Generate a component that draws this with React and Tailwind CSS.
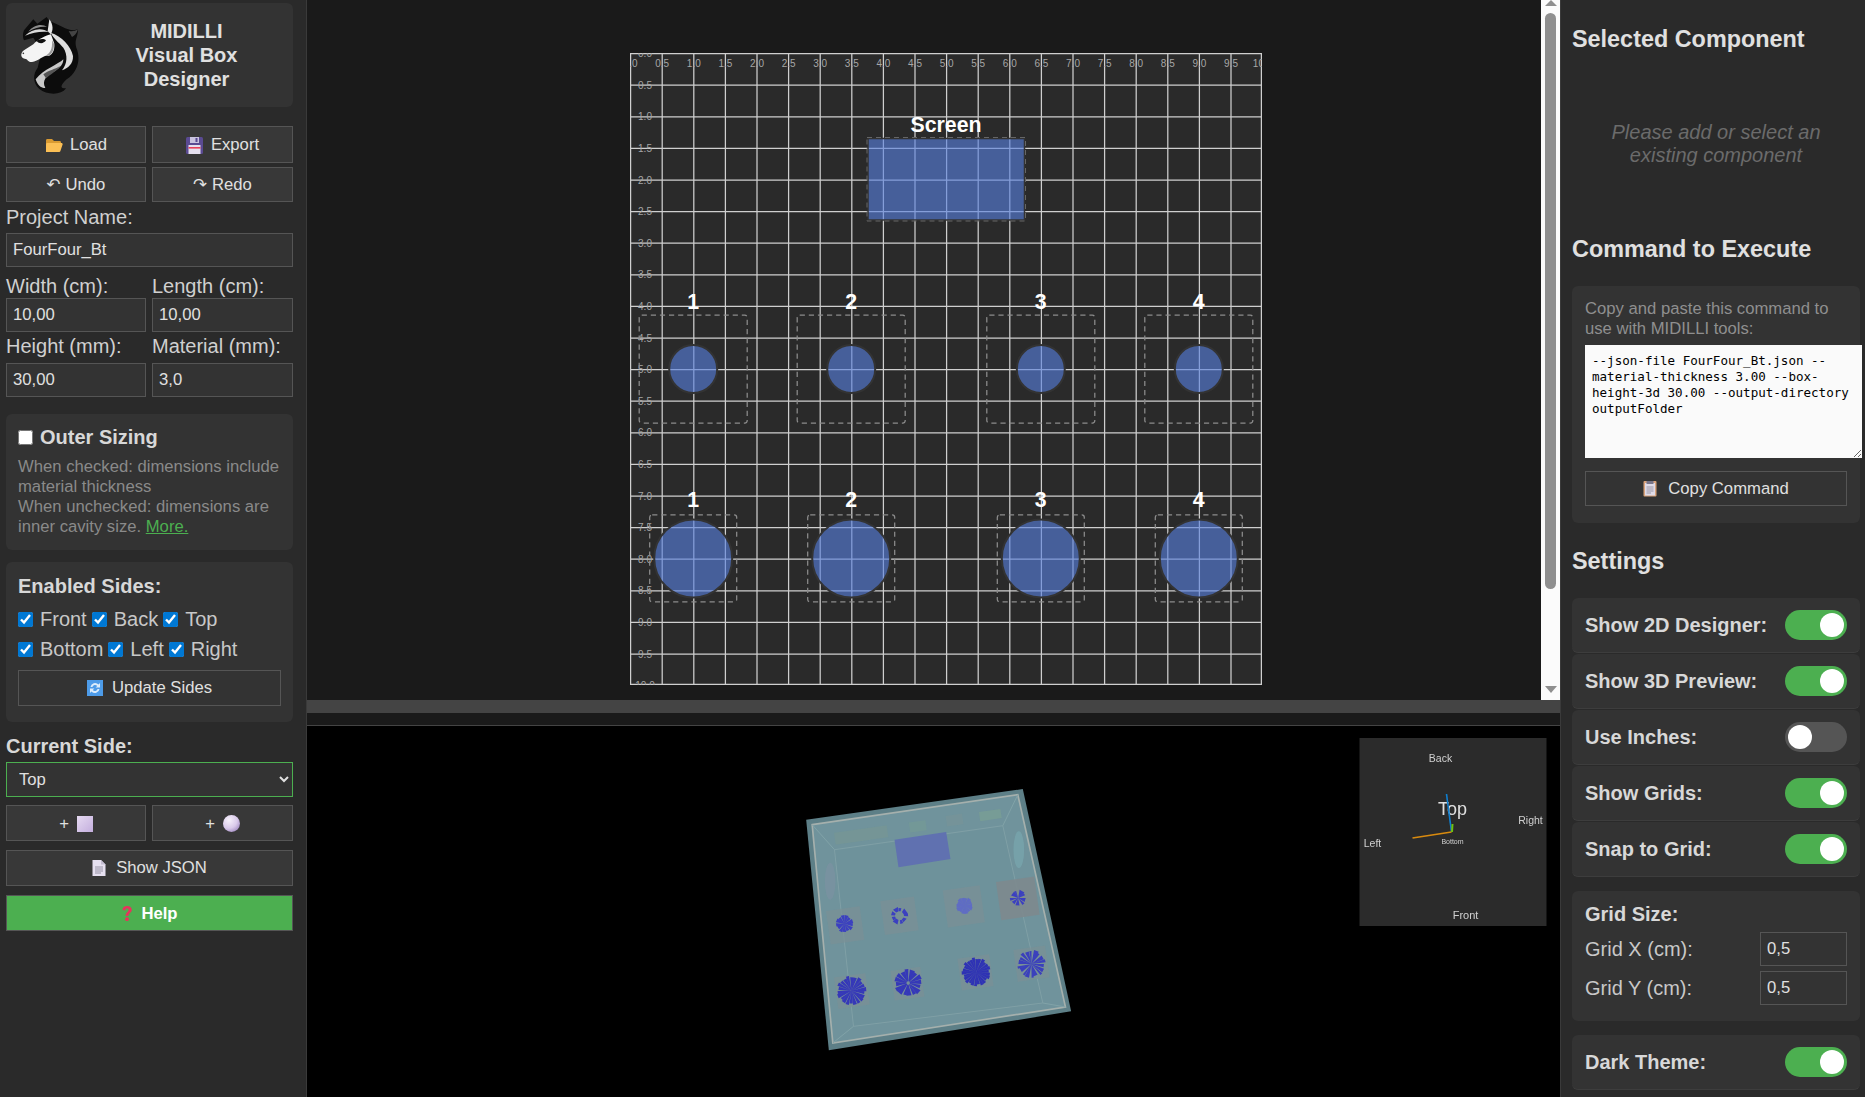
import React from "react";

const FONT = { fontFamily: '"Liberation Sans", "DejaVu Sans", Arial, sans-serif' };

function Folder() {
  return (
    <svg width="18" height="15" viewBox="0 0 18 15">
      <path d="M1 2.5 C1 1.5 1.5 1 2.5 1 H7 L9 3 H14.5 C15.5 3 16 3.5 16 4.5 V6 H1 Z" fill="#d99a32" />
      <path d="M1 14 V6.5 C1 5.5 1.5 5 2.5 5 H16 C17.3 5 18 5.6 17.6 6.6 L15.4 13 C15.1 13.8 14.6 14 14 14 Z" fill="#fbbf55" />
    </svg>
  );
}
function Floppy() {
  return (
    <svg width="17" height="17" viewBox="0 0 17 17">
      <rect width="17" height="17" rx="1.5" fill="#5a4a92" />
      <rect x="4" y="0" width="9" height="6" fill="#c9c3df" />
      <rect x="9.5" y="1" width="2" height="4" fill="#5a4a92" />
      <rect x="2.5" y="8" width="12" height="9" fill="#e6e0ef" />
      <rect x="2.5" y="10" width="12" height="1.6" fill="#e8405a" />
    </svg>
  );
}
function Refresh() {
  return (
    <svg width="16" height="16" viewBox="0 0 16 16">
      <rect width="16" height="16" fill="#4d9be8" />
      <path d="M3.5 7 A4.6 4.6 0 0 1 11.5 4.5 L13 3 V7.5 H8.6 L10.2 5.9 A2.8 2.8 0 0 0 5.4 7 Z" fill="#dcecfb" />
      <path d="M12.5 9 A4.6 4.6 0 0 1 4.5 11.5 L3 13 V8.5 H7.4 L5.8 10.1 A2.8 2.8 0 0 0 10.6 9 Z" fill="#dcecfb" />
    </svg>
  );
}
function Clipboard() {
  return (
    <svg width="14" height="16" viewBox="0 0 14 16">
      <rect width="13" height="15.5" x="0.5" rx="1" fill="#d9a47c" />
      <rect x="2" y="2" width="10" height="12.5" fill="#dfdbe8" />
      <rect x="3.5" y="0" width="7" height="3" rx="0.5" fill="#77758a" />
      <path d="M3.5 6 H10.5 M3.5 8 H10.5 M3.5 10 H10.5 M3.5 12 H8" stroke="#9b98a8" strokeWidth="1" />
    </svg>
  );
}
function Page() {
  return (
    <svg width="14" height="16" viewBox="0 0 14 16">
      <path d="M0.5 0 H9 L13.5 4.5 V16 H0.5 Z" fill="#e6e0f0" />
      <path d="M9 0 L13.5 4.5 H9 Z" fill="#c4bdd2" />
      <path d="M3 7 H11 M3 9 H11 M3 11 H11 M3 13 H9" stroke="#8f8a9c" strokeWidth="0.9" />
    </svg>
  );
}
function Question() {
  return (
    <svg width="12" height="17" viewBox="0 0 12 17">
      <path d="M1.5 5 C1.5 2 3.5 1 6 1 C9 1 10.8 2.6 10.8 5 C10.8 7.5 7.6 8 7.4 11 H4.6 C4.6 7.4 7.6 7 7.6 5 C7.6 4 7 3.6 6 3.6 C5 3.6 4.4 4.2 4.4 5.4 Z" fill="#e8335c" />
      <circle cx="6" cy="14.2" r="1.9" fill="#e8335c" />
    </svg>
  );
}
function PurpleSquare() {
  return (
    <svg width="16" height="16" viewBox="0 0 16 16">
      <defs>
        <linearGradient id="ps" x1="0" y1="0" x2="1" y2="1">
          <stop offset="0" stopColor="#e6daf2" />
          <stop offset="1" stopColor="#c3aedd" />
        </linearGradient>
      </defs>
      <rect width="16" height="16" fill="url(#ps)" />
    </svg>
  );
}
function Sphere() {
  return (
    <svg width="17" height="17" viewBox="0 0 17 17">
      <defs>
        <radialGradient id="sp" cx="0.35" cy="0.3" r="0.8">
          <stop offset="0" stopColor="#f6f1fb" />
          <stop offset="0.6" stopColor="#d9c9ea" />
          <stop offset="1" stopColor="#9f88c0" />
        </radialGradient>
      </defs>
      <circle cx="8.5" cy="8.5" r="8.5" fill="url(#sp)" />
    </svg>
  );
}

function Logo() {
  return (
    <svg width="60" height="81" viewBox="60 42 180 243">
      <path d="M100 55 L112 68 L140 48 L148 60 C180 72 210 95 234 85 C234 110 222 118 229 140 C244 175 232 215 200 235 C185 250 175 262 198 262 C183 284 140 282 118 264 C98 245 98 220 113 200 L125 150 L100 110 L72 118 C66 104 70 95 72 88 Z" fill="#0c0c0c" />
      <path d="M75 104 C95 84 125 78 147 94 C125 90 100 95 75 104 Z" fill="#d8d8d8" />
      <path d="M85 92 C100 72 125 66 142 78 C122 76 104 82 85 92 Z" fill="#8a8a8a" />
      <path d="M148 55 C160 70 160 88 152 100 L143 90 Z" fill="#e8e8e8" />
      <path d="M153 100 C138 104 115 114 100 130 L72 148 C60 156 62 172 74 173 C84 173 82 184 96 183 C115 180 122 170 135 165 C155 168 165 150 163 128 Z" fill="#f4f4f4" />
      <path d="M135 165 C152 168 163 150 162 128 L156 118 C158 145 150 158 135 165 Z" fill="#9a9a9a" />
      <path d="M110 120 C118 113 132 112 138 118 C132 128 118 130 110 120 Z" fill="#111" />
      <circle cx="70" cy="157" r="2.5" fill="#333" />
      <path d="M152 95 C185 105 213 135 219 165 C220 188 204 202 186 208 C202 188 204 162 190 140 C175 122 162 115 152 95 Z" fill="#dedede" />
      <path d="M190 175 C175 190 130 205 107 235 C113 255 128 264 136 260 C124 240 140 222 165 210 C180 200 190 190 190 175 Z" fill="#c8c8c8" />
      <path d="M130 220 C145 208 165 205 180 195 C170 212 150 220 138 232 Z" fill="#555" />
      <path d="M206 90 C218 92 226 90 234 85 C230 98 222 106 216 108 Z" fill="#444" />
    </svg>
  );
}

function Btn({ children, cls = "" }) {
  return (
    <button className={"flex items-center justify-center border border-[#555] bg-[#383838] pt-[1px] text-[16.67px] leading-[20px] text-[#e0e0e0] " + cls}>
      {children}
    </button>
  );
}

function Field({ value, cls = "" }) {
  return (
    <input
      defaultValue={value}
      className={"h-[34px] min-w-0 border border-[#555] bg-[#333] px-[6px] text-[16.67px] text-[#e0e0e0] outline-none " + cls}
    />
  );
}

function Check({ label }) {
  return (
    <label className="flex items-center">
      <input type="checkbox" defaultChecked className="m-0 h-[15px] w-[15px] accent-[#0078d4]" />
      <span className="ml-[7px]">{label}</span>
    </label>
  );
}

function Toggle({ on = true }) {
  return (
    <div className={"flex h-[30px] w-[62px] shrink-0 items-center rounded-full px-[3px] " + (on ? "justify-end bg-[#4caf50]" : "justify-start bg-[#555]")}>
      <div className="h-[24px] w-[24px] rounded-full bg-white" />
    </div>
  );
}

function ToggleRow({ label, on }) {
  return (
    <div className="flex h-[55px] items-center justify-between rounded-[6px] border-b border-[#3d3d3d] bg-[#333] px-[13px]">
      <span className="text-[20px] font-bold leading-none text-[#d8d8d8]">{label}</span>
      <Toggle on={on} />
    </div>
  );
}

const TICKS = Array.from({ length: 21 }, (_, i) => i);
const STEP = 31.6;
const XS = [63.2, 221.2, 410.8, 568.8];

function Component({ cx, cy, r, box, label, labelY }) {
  return (
    <g>
      <rect x={cx - box / 2} y={cy - box / 2} width={box} height={box} rx="2.5" fill="none" stroke="#8c8c8c" strokeWidth="1.25" strokeDasharray="5.2 3.9" />
      <circle cx={cx} cy={cy} r={r} fill="rgba(87,127,222,0.62)" stroke="#333" strokeWidth="2" />
      <text x={cx} y={labelY} textAnchor="middle" dominantBaseline="central" fontSize="21.3" fontWeight="700" fill="#fff" style={FONT}>{label}</text>
    </g>
  );
}

function GridCanvas() {
  return (
    <svg width="632" height="632" viewBox="0 0 632 632" className="block shrink-0 bg-[#2a2a2a]" style={FONT}>
      {TICKS.map((i) => (
        <g key={i}>
          <line x1={0.6 + i * STEP} y1="0" x2={0.6 + i * STEP} y2="632" stroke="#cfcfcf" strokeWidth="1.25" />
          <line x1="0" y1={0.6 + i * STEP} x2="632" y2={0.6 + i * STEP} stroke="#cfcfcf" strokeWidth="1.25" />
        </g>
      ))}
      <line x1="631.4" y1="0" x2="631.4" y2="632" stroke="#cfcfcf" strokeWidth="1.25" />
      <line x1="0" y1="631.4" x2="632" y2="631.4" stroke="#cfcfcf" strokeWidth="1.25" />
      {TICKS.map((i) => (
        <g key={i} fontSize="10" fill="#a6a6a6">
          <text x={i * STEP + 0.6} y="10.5" textAnchor="middle" dominantBaseline="central">{(i * 0.5).toFixed(1)}</text>
          <text x="15" y={i * STEP + 0.6} textAnchor="middle" dominantBaseline="central">{(i * 0.5).toFixed(1)}</text>
        </g>
      ))}
      <rect x="238" y="85.5" width="156.5" height="81.5" fill="rgba(87,127,222,0.62)" stroke="#333" strokeWidth="1.5" />
      <rect x="237" y="84.5" width="158.5" height="83.5" fill="none" stroke="#666" strokeWidth="1" strokeDasharray="5 4" />
      <text x="316" y="72" textAnchor="middle" dominantBaseline="central" fontSize="21.3" fontWeight="700" fill="#fff">Screen</text>
      {XS.map((x, i) => (
        <Component key={i} cx={x} cy={316} r={24} box={108} label={String(i + 1)} labelY={249} />
      ))}
      {XS.map((x, i) => (
        <Component key={i} cx={x} cy={505.4} r={39} box={87} label={String(i + 1)} labelY={447} />
      ))}
    </svg>
  );
}

function Burst({ cx, cy, r, n, fill, gap = 0.35, hole = 0, seed = 1, op = 1 }) {
  const parts = [];
  for (let i = 0; i < n; i++) {
    const a0 = (i / n) * Math.PI * 2 + seed;
    const w = ((Math.PI * 2) / n) * (1 - gap * (0.5 + 0.5 * Math.sin(i * 2.7 + seed)));
    const rr = r * (0.93 + 0.07 * Math.sin(i * 4.1 + seed * 3));
    const ri = hole * r;
    const x = (t, q) => (cx + Math.cos(t) * q).toFixed(1);
    const y = (t, q) => (cy + Math.sin(t) * q).toFixed(1);
    parts.push(`M${x(a0, ri)} ${y(a0, ri)} L${x(a0, rr)} ${y(a0, rr)} L${x(a0 + w, rr)} ${y(a0 + w, rr)} L${x(a0 + w, ri)} ${y(a0 + w, ri)} Z`);
  }
  return <path d={parts.join(" ")} fill={fill} opacity={op} />;
}

function Tile({ cx, cy, w, fill = "#7b9095", op = 0.7 }) {
  return <rect x={cx - w / 2} y={cy - w / 2} width={w} height={w} fill={fill} opacity={op} transform={`rotate(-8 ${cx} ${cy})`} />;
}

function Scene() {
  return (
    <svg width="1253" height="372" viewBox="0 0 1253 372" className="block" style={FONT}>
      <defs>
        <filter id="soft" x="-5%" y="-5%" width="110%" height="110%">
          <feGaussianBlur stdDeviation="0.5" />
        </filter>
        <filter id="soft2" x="-20%" y="-20%" width="140%" height="140%">
          <feGaussianBlur stdDeviation="0.6" />
        </filter>
      </defs>
      <g transform="translate(472.5 43.7) scale(0.3333)" filter="url(#soft)">
        <polygon points="80,150 730,58 875,725 148,842" fill="#5d7f87" />
        <polygon points="98,165 715,75 858,712 160,820" fill="#6f939c" stroke="#a5b0ad" strokeWidth="5" />
        <polygon points="165,240 670,168 790,700 222,770" fill="#6e929b" stroke="#7fa0a6" strokeWidth="3" />
        <line x1="98" y1="165" x2="165" y2="240" stroke="#82a3a8" strokeWidth="3" />
        <line x1="715" y1="75" x2="670" y2="168" stroke="#82a3a8" strokeWidth="3" />
        <line x1="858" y1="712" x2="790" y2="700" stroke="#82a3a8" strokeWidth="3" />
        <line x1="160" y1="820" x2="222" y2="770" stroke="#82a3a8" strokeWidth="3" />
        <rect x="165" y="178" width="160" height="36" fill="#7a9a90" opacity="0.45" transform="rotate(-8 245 196)" />
        <rect x="390" y="155" width="50" height="30" fill="#7a9f90" opacity="0.4" transform="rotate(-8 415 170)" />
        <rect x="500" y="135" width="50" height="32" fill="#7d9496" opacity="0.45" transform="rotate(-8 525 150)" />
        <rect x="600" y="122" width="65" height="28" fill="#7fa690" opacity="0.5" transform="rotate(-8 632 136)" />
        <ellipse cx="152" cy="335" rx="16" ry="55" fill="#8791a8" opacity="0.4" />
        <ellipse cx="718" cy="240" rx="16" ry="55" fill="#7fb4bb" opacity="0.45" />
        <polygon points="345,210 500,187 513,268 357,293" fill="#6071b0" />
        <Tile cx={197} cy={467} w={102} />
        <Tile cx={360} cy={438} w={102} />
        <Tile cx={553} cy={410} w={112} />
        <Tile cx={715} cy={386} w={116} fill="#7d8a8e" op={0.9} />
        <Tile cx={217} cy={664} w={95} />
        <Tile cx={384} cy={642} w={90} />
        <Tile cx={588} cy={608} w={96} />
        <Tile cx={756} cy={582} w={96} />
        <Burst cx={195} cy={462} r={27} n={13} fill="#3b3fc0" gap={0.22} seed={0.4} />
        <Burst cx={360} cy={438} r={27} n={9} fill="#3b3fc0" gap={0.5} hole={0.5} seed={1.1} />
        <Burst cx={555} cy={408} r={26} n={14} fill="#5f6cc4" gap={0.08} seed={0.2} />
        <Burst cx={716} cy={385} r={25} n={9} fill="#3b3fc0" gap={0.65} seed={0.7} />
        <Burst cx={216} cy={663} r={45} n={22} fill="#3538b8" gap={0.25} seed={0.9} />
        <Burst cx={386} cy={640} r={43} n={16} fill="#3538b8" gap={0.3} hole={0.12} seed={1.7} />
        <Burst cx={590} cy={607} r={44} n={26} fill="#2f33b4" gap={0.14} seed={0.3} />
        <Burst cx={756} cy={583} r={43} n={18} fill="#3a3fbc" gap={0.55} seed={2.1} />
      </g>
      <g transform="translate(-307.5 -726)">
        <rect x="1360" y="738" width="187" height="188" fill="#2b2b2b" />
        <g filter="url(#soft2)" fill="#d0d0d0" textAnchor="middle">
          <text x="1441" y="758" fontSize="10.5" dominantBaseline="central">Back</text>
          <text x="1453" y="809" fontSize="18" dominantBaseline="central" fill="#e0e0e0">Top</text>
          <text x="1531" y="820" fontSize="10.5" dominantBaseline="central">Right</text>
          <text x="1373" y="843" fontSize="10.5" dominantBaseline="central">Left</text>
          <text x="1453" y="841" fontSize="7" dominantBaseline="central">Bottom</text>
          <text x="1466" y="915" fontSize="11" dominantBaseline="central">Front</text>
          <line x1="1447" y1="794" x2="1452" y2="832" stroke="#0f7fd0" strokeWidth="1.6" />
          <line x1="1413" y1="838" x2="1452" y2="832" stroke="#d98a10" strokeWidth="1.6" />
          <line x1="1452.5" y1="832" x2="1453" y2="824" stroke="#70c010" strokeWidth="2" />
        </g>
      </g>
    </svg>
  );
}

function Scrollbar() {
  return (
    <div className="flex h-full w-[19px] shrink-0 flex-col items-center bg-[#fbfbfb]">
      <div className="h-0 w-0 border-x-[6px] border-b-[6px] border-x-transparent border-b-[#8f8f8f]" />
      <div className="mt-[7px] h-[576px] w-[11px] rounded-full bg-[#8f8f8f]" />
      <div className="mt-[97px] h-0 w-0 border-x-[6px] border-t-[7px] border-x-transparent border-t-[#8f8f8f]" />
    </div>
  );
}

export default function App() {
  return (
    <div className="flex h-[1097px] w-[1865px] overflow-hidden bg-[#2a2a2a] text-[#e0e0e0]" style={FONT}>
      {/* left panel */}
      <aside className="w-[306px] shrink-0 overflow-hidden bg-[#2a2a2a] pl-[6px] pr-[13px] pt-[3px]">
        <div className="flex h-[104px] items-center rounded-[6px] bg-[#333]">
          <div className="ml-[14px] shrink-0"><Logo /></div>
          <h1 className="flex-1 text-center text-[20px] font-bold leading-[24px] text-[#e0e0e0]">MIDILLI<br />Visual Box<br />Designer</h1>
        </div>

        <div className="mt-[19px] grid grid-cols-[140px_141px] gap-x-[6px]">
          <Btn cls="h-[37px] gap-[7px]"><Folder /><span>Load</span></Btn>
          <Btn cls="h-[37px] gap-[8px]"><Floppy /><span>Export</span></Btn>
          <Btn cls="mt-[4px] h-[35px] gap-[5px]"><span>↶</span><span>Undo</span></Btn>
          <Btn cls="mt-[4px] h-[35px] gap-[5px]"><span>↷</span><span>Redo</span></Btn>
        </div>

        <div className="mt-[4px] h-[27px] text-[20px] leading-[23px] text-[#d0d0d0]">Project Name:</div>
        <Field value="FourFour_Bt" cls="w-full" />

        <div className="mt-[7px] grid grid-cols-[140px_141px] gap-x-[6px] text-[20px] text-[#d0d0d0]">
          <div className="flex min-w-0 flex-col">
            <label className="h-[24px] leading-[25px]">Width (cm):</label>
            <Field value="10,00" />
          </div>
          <div className="flex min-w-0 flex-col">
            <label className="h-[24px] leading-[25px]">Length (cm):</label>
            <Field value="10,00" />
          </div>
          <div className="mt-[3px] flex min-w-0 flex-col">
            <label className="h-[28px] leading-[23px]">Height (mm):</label>
            <Field value="30,00" />
          </div>
          <div className="mt-[3px] flex min-w-0 flex-col">
            <label className="h-[28px] leading-[23px]">Material (mm):</label>
            <Field value="3,0" />
          </div>
        </div>

        <section className="mt-[17px] h-[136px] rounded-[6px] bg-[#333] px-[12px] pt-[10px]">
          <label className="flex h-[26px] items-center text-[20px] font-bold text-[#d8d8d8]">
            <input type="checkbox" className="m-0 h-[15px] w-[15px] accent-[#0078d4]" />
            <span className="ml-[7px]">Outer Sizing</span>
          </label>
          <p className="mt-[6.5px] text-[16.67px] leading-[20px] text-[#8a8a8a]">
            When checked: dimensions include<br />material thickness<br />When unchecked: dimensions are<br />inner cavity size. <a className="text-[#4caf50] underline">More.</a>
          </p>
        </section>

        <section className="mt-[12px] h-[160px] rounded-[6px] bg-[#333] px-[12px] pt-[11px]">
          <div className="h-[26px] text-[20px] font-bold leading-[26px] text-[#d8d8d8]">Enabled Sides:</div>
          <div className="mt-[7px] flex h-[26px] items-center gap-[5px] text-[20px] text-[#c8c8c8]">
            <Check label="Front" />
            <Check label="Back" />
            <Check label="Top" />
          </div>
          <div className="mt-[4px] flex h-[26px] items-center gap-[5px] text-[20px] text-[#c8c8c8]">
            <Check label="Bottom" />
            <Check label="Left" />
            <Check label="Right" />
          </div>
          <Btn cls="mt-[7.5px] h-[36.5px] w-full gap-[9px] !bg-[#333]"><Refresh /><span>Update Sides</span></Btn>
        </section>

        <div className="mt-[10px] h-[30px] text-[20px] font-bold leading-[28px] text-[#d8d8d8]">Current Side:</div>
        <select defaultValue="Top" className="block h-[35px] w-full border border-[#4caf50] bg-[#333] px-[8px] text-[16.67px] text-[#e0e0e0] outline-none">
          <option>Top</option>
        </select>
        <div className="mt-[8px] grid grid-cols-[140px_141px] gap-x-[6px]">
          <Btn cls="h-[36px] gap-[8px]"><span>+</span><PurpleSquare /></Btn>
          <Btn cls="h-[36px] gap-[8px]"><span>+</span><Sphere /></Btn>
        </div>
        <Btn cls="mt-[8.5px] h-[36px] w-full gap-[10px]"><Page /><span>Show JSON</span></Btn>
        <button className="mt-[9px] flex h-[36px] w-full items-center justify-center gap-[8px] border border-[#555] bg-[#4caf50] pt-[1px] text-[16.67px] font-bold text-white">
          <Question /><span>Help</span>
        </button>
      </aside>

      {/* centre */}
      <main className="flex min-w-0 flex-1 flex-col border-l border-[#3a3a3a] bg-[#1a1a1a]">
        <div className="flex h-[700px] shrink-0">
          <div className="min-w-0 flex-1 pl-[323px] pt-[53px]">
            <GridCanvas />
          </div>
          <Scrollbar />
        </div>
        <div className="h-[13px] shrink-0 bg-[#444]" />
        <div className="h-[12px] shrink-0 bg-[#1a1a1a]" />
        <div className="min-h-0 flex-1 overflow-hidden border-t border-[#444] bg-black">
          <Scene />
        </div>
      </main>

      {/* right panel */}
      <aside className="w-[305px] shrink-0 overflow-hidden border-l border-[#3a3a3a] bg-[#2a2a2a] pl-[11px] pr-[5px]">
        <h3 className="mt-[25px] h-[28px] text-[23.4px] font-bold leading-[28px] text-[#e0e0e0]">Selected Component</h3>
        <p className="mt-[67.5px] text-center text-[20px] italic leading-[23px] text-[#6b6b6b]">
          Please add or select an<br />existing component
        </p>
        <h3 className="mt-[68px] h-[28px] text-[23.4px] font-bold leading-[28px] text-[#e0e0e0]">Command to Execute</h3>
        <section className="mt-[23px] h-[237.5px] rounded-[6px] bg-[#333] px-[13px] pt-[13px]">
          <p className="text-[16.67px] leading-[20px] text-[#8f8f8f]">Copy and paste this command to<br />use with MIDILLI tools:</p>
          <textarea
            readOnly
            defaultValue={"--json-file FourFour_Bt.json --material-thickness 3.00 --box-height-3d 30.00 --output-directory outputFolder"}
            className="mt-[6.5px] block h-[113px] w-[277px] max-w-none resize border-0 bg-[#fafafa] px-[7px] pb-[4px] pt-[8px] text-[12.55px] leading-[16px] text-black outline-none"
            style={{ fontFamily: '"DejaVu Sans Mono", monospace' }}
          />
          <Btn cls="mt-[13px] h-[35px] w-full gap-[11px] !bg-[#333]"><Clipboard /><span>Copy Command</span></Btn>
        </section>
        <h3 className="mt-[24px] h-[28px] text-[23.4px] font-bold leading-[28px] text-[#e0e0e0]">Settings</h3>
        <div className="mt-[22.5px] flex flex-col gap-[1px]">
          <ToggleRow label="Show 2D Designer:" on />
          <ToggleRow label="Show 3D Preview:" on />
          <ToggleRow label="Use Inches:" on={false} />
          <ToggleRow label="Show Grids:" on />
          <ToggleRow label="Snap to Grid:" on />
        </div>
        <section className="mt-[14px] h-[130px] rounded-[6px] bg-[#333] px-[13px] pt-[11px]">
          <div className="h-[24px] text-[20px] font-bold leading-[24px] text-[#d8d8d8]">Grid Size:</div>
          <div className="mt-[6px] flex h-[34px] items-center justify-between text-[20px] text-[#c8c8c8]">
            <span>Grid X (cm):</span>
            <input defaultValue="0,5" className="h-[34px] w-[87px] border border-[#555] bg-[#333] px-[6px] text-[16.67px] text-[#e0e0e0] outline-none" />
          </div>
          <div className="mt-[5px] flex h-[34px] items-center justify-between text-[20px] text-[#c8c8c8]">
            <span>Grid Y (cm):</span>
            <input defaultValue="0,5" className="h-[34px] w-[87px] border border-[#555] bg-[#333] px-[6px] text-[16.67px] text-[#e0e0e0] outline-none" />
          </div>
        </section>
        <div className="mt-[14px]"><ToggleRow label="Dark Theme:" on /></div>
      </aside>
    </div>
  );
}
